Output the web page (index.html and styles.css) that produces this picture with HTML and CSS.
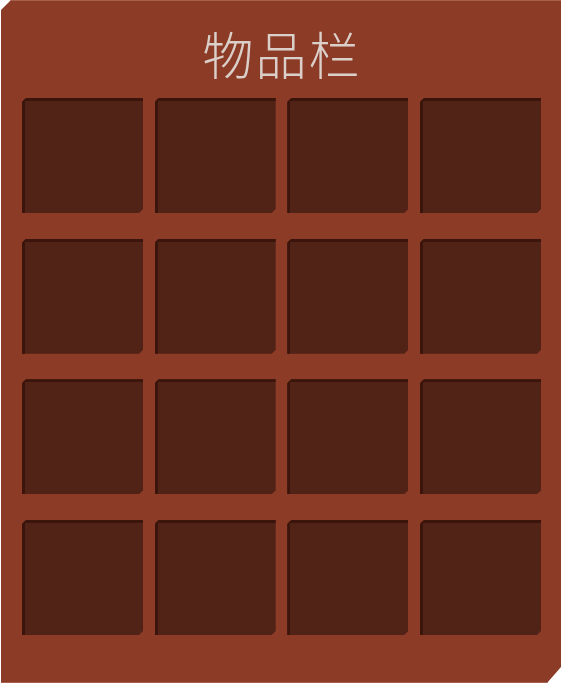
FILE: index.html
```html
<!DOCTYPE html>
<html lang="zh">
<head>
<meta charset="utf-8">
<title>物品栏</title>
<link rel="stylesheet" href="styles.css">
</head>
<body>
<div class="panel">
  <h1 class="title">物品栏</h1>
  <div class="grid">
    <div class="slot"></div><div class="slot"></div><div class="slot"></div><div class="slot"></div>
    <div class="slot"></div><div class="slot"></div><div class="slot"></div><div class="slot"></div>
    <div class="slot"></div><div class="slot"></div><div class="slot"></div><div class="slot"></div>
    <div class="slot"></div><div class="slot"></div><div class="slot"></div><div class="slot"></div>
  </div>
</div>
</body>
</html>
```
FILE: styles.css
```css
html, body {
  margin: 0;
  padding: 0;
  background: #ffffff;
}
body {
  padding-left: 1px;
}
.panel {
  box-sizing: border-box;
  width: 560px;
  height: 683px;
  background: #8c3b26;
  border-top: 1px solid #a8604d;
  border-bottom: 1px solid #a8604d;
  clip-path: polygon(10px 0, 100% 0, 100% calc(100% - 16px), calc(100% - 14px) 100%, 0 100%, 0 10px);
  padding: 0 19px 0 21px;
  display: flex;
  flex-direction: column;
}
.title {
  margin: 0;
  height: 97px;
  display: flex;
  align-items: center;
  justify-content: center;
  font-family: "Noto Sans CJK SC", sans-serif;
  font-weight: 300;
  font-size: 51px;
  letter-spacing: 2px;
  color: #dbcfc9;
  padding-top: 6px;
  box-sizing: border-box;
}
.grid {
  display: grid;
  grid-template-columns: repeat(4, 121px);
  grid-template-rows: repeat(4, 115px);
  column-gap: 11.67px;
  row-gap: 25.67px;
}
.slot {
  box-sizing: border-box;
  background: #512216;
  border-top: 3px solid #3b150c;
  border-left: 3px solid #3b150c;
  clip-path: polygon(4px 0, 100% 0, 100% calc(100% - 4px), calc(100% - 4px) 100%, 0 100%, 0 4px);
}
```
